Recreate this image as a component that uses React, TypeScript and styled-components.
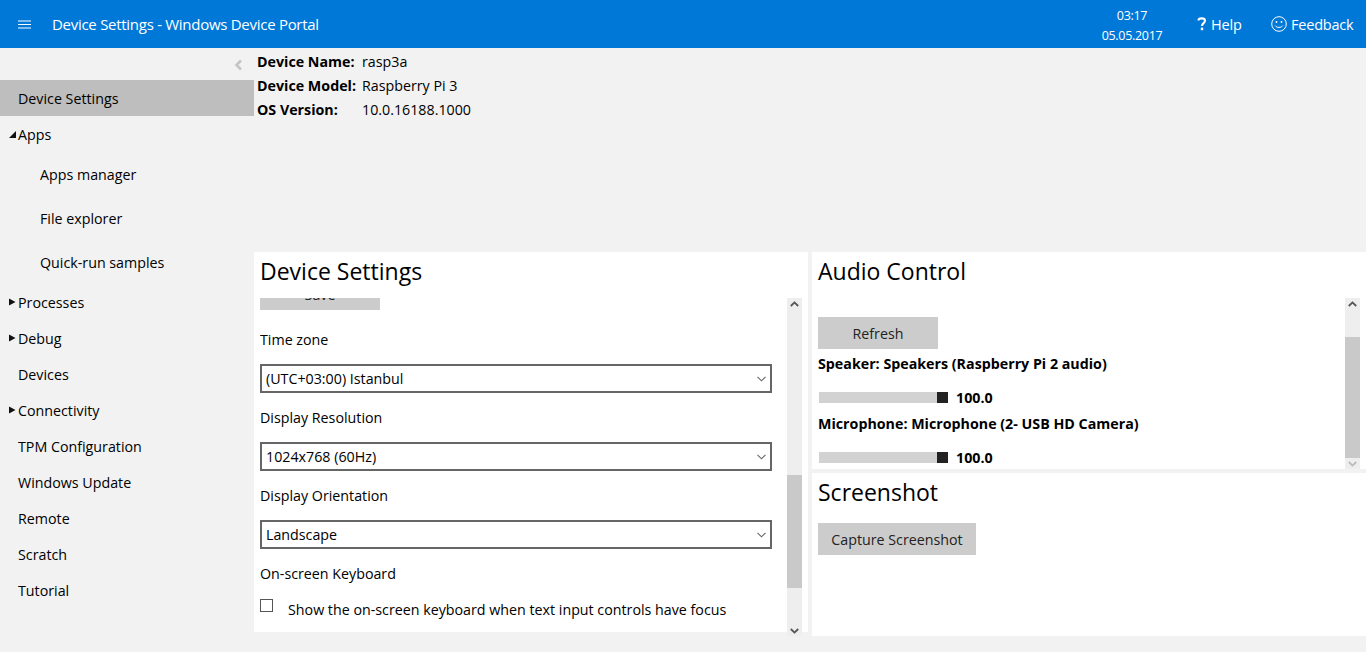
import React from "react";
import styled, { createGlobalStyle } from "styled-components";

const GlobalStyle = createGlobalStyle`
  html, body {
    margin: 0;
    padding: 0;
    height: 100%;
    overflow: hidden;
    background: #f2f2f2;
    color: #000;
    font-family: "Open Sans", "Noto Sans", "Liberation Sans", sans-serif;
    font-size: 14.25px;
  }
  * { box-sizing: border-box; }
`;

const Page = styled.div`
  width: 1366px;
  height: 652px;
  display: flex;
  flex-direction: column;
  overflow: hidden;
`;

const Header = styled.header`
  height: 48px;
  flex: none;
  background: #0078d7;
  color: #fff;
  display: flex;
  align-items: center;
`;

const Burger = styled.div`
  width: 52px;
  padding-left: 18px;
  display: flex;
  align-items: center;
`;

const Title = styled.div`
  flex: 1;
  font-size: 15px;
  letter-spacing: -0.28px;
`;

const Clock = styled.div`
  width: 70px;
  margin-right: 30px;
  padding-top: 3px;
  text-align: center;
  font-size: 12.5px;
  letter-spacing: -0.3px;
  line-height: 20px;
`;

const HeaderLink = styled.div<{ $width: number }>`
  width: ${(p) => p.$width}px;
  display: flex;
  align-items: center;
  gap: 4px;
  font-size: 14.5px;
  letter-spacing: -0.2px;
`;

const Body = styled.div`
  flex: 1;
  display: flex;
  min-height: 0;
`;

const Sidebar = styled.nav`
  width: 254px;
  flex: none;
`;

const Collapse = styled.div`
  height: 32px;
  display: flex;
  justify-content: flex-end;
  align-items: center;
  padding: 2px 10px 0 0;
`;

const NavRow = styled.div<{ $selected?: boolean; $sub?: boolean }>`
  height: ${(p) => (p.$sub ? 44 : 36)}px;
  display: flex;
  align-items: center;
  padding-left: ${(p) => (p.$sub ? 40 : 18)}px;
  background: ${(p) => (p.$selected ? "#bebebe" : "transparent")};
  position: relative;
`;

const Caret = styled.svg<{ $top: number }>`
  position: absolute;
  left: 9px;
  top: ${(p) => p.$top}px;
`;

const Main = styled.div`
  flex: 1;
  min-width: 0;
  display: flex;
  flex-direction: column;
`;

const InfoArea = styled.div`
  height: 204px;
  flex: none;
  padding: 1px 0 0 3px;
  display: grid;
  grid-template-columns: 105px 1fr;
  grid-auto-rows: 24px;
  align-items: center;
`;

const InfoLabel = styled.div`
  font-weight: 700;
`;

const Panels = styled.div`
  display: flex;
  gap: 4px;
  align-items: flex-start;
`;

const LeftPanel = styled.section`
  width: 554px;
  height: 380px;
  background: #fff;
  display: flex;
  flex-direction: column;
  padding-left: 6px;
`;

const RightColumn = styled.div`
  width: 554px;
  display: flex;
  flex-direction: column;
  gap: 4px;
`;

const AudioPanel = styled.section`
  height: 217px;
  background: #fff;
  display: flex;
  flex-direction: column;
  padding-left: 6px;
`;

const ShotPanel = styled.section`
  height: 163px;
  background: #fff;
  padding-left: 6px;
`;

const Heading = styled.h2`
  margin: 0;
  height: 46px;
  flex: none;
  font-size: 23px;
  font-weight: 400;
  line-height: 38px;
`;

const PanelBody = styled.div`
  flex: 1;
  min-height: 0;
  display: flex;
`;

const Scroller = styled.div`
  flex: 1;
  min-width: 0;
  overflow: hidden;
`;

const ScrollContent = styled.div<{ $offset: number }>`
  margin-top: ${(p) => p.$offset}px;
`;

const Button = styled.div<{ $width: number }>`
  width: ${(p) => p.$width}px;
  height: 32px;
  background: #ccc;
  color: #222;
  display: flex;
  align-items: center;
  justify-content: center;
`;

const SaveButton = styled(Button)`
  margin-bottom: 20px;
`;

const FieldLabel = styled.div`
  height: 20px;
  line-height: 20px;
`;

const Select = styled.div`
  width: 512px;
  height: 29px;
  margin: 14px 0 15px;
  border: 2px solid #666;
  display: flex;
  align-items: center;
  justify-content: space-between;
  padding: 0 4px;
`;

const CheckRow = styled.div`
  display: flex;
  align-items: center;
  margin-top: 16px;
`;

const CheckBox = styled.div`
  width: 13px;
  height: 13px;
  border: 1px solid #555;
  margin: -9px 15px 0 0;
`;

const Track = styled.div<{ $height: number }>`
  width: 15px;
  height: ${(p) => p.$height}px;
  margin-right: 6px;
  flex: none;
  background: #eee;
  position: relative;
  display: flex;
  flex-direction: column;
  justify-content: space-between;
  align-items: center;
  padding: 3px 0 2px;
`;

const Thumb = styled.div<{ $top: number; $height: number }>`
  position: absolute;
  left: 0;
  width: 15px;
  top: ${(p) => p.$top}px;
  height: ${(p) => p.$height}px;
  background: #c9c9c9;
`;

const DeviceName = styled.div`
  font-weight: 700;
  height: 20px;
  line-height: 20px;
  margin-top: 5px;
`;

const SliderRow = styled.div`
  display: flex;
  align-items: center;
  margin: 13px 0 7px;
  height: 20px;
`;

const Slider = styled.div`
  width: 129px;
  height: 11px;
  margin-left: 1px;
  background: #d2d2d2;
  display: flex;
  justify-content: flex-end;
`;

const SliderThumb = styled.div`
  width: 11px;
  height: 11px;
  background: #222;
`;

const SliderValue = styled.div`
  margin-left: 8px;
  font-weight: 700;
`;

const ShotActions = styled.div`
  padding-top: 4px;
`;

function Chevron({ up, color = "#555" }: { up?: boolean; color?: string }) {
  return (
    <svg width="9" height="6" viewBox="0 0 9 6">
      <path
        d={up ? "M0.8 5 L4.5 1.4 L8.2 5" : "M0.8 1 L4.5 4.6 L8.2 1"}
        fill="none"
        stroke={color}
        strokeWidth="1.8"
      />
    </svg>
  );
}

function SelectBox({ value }: { value: string }) {
  return (
    <Select>
      {value}
      <svg width="9" height="6" viewBox="0 0 9 6">
        <path d="M0.5 0.8 L4.5 4.8 L8.5 0.8" fill="none" stroke="#666" strokeWidth="1.1" />
      </svg>
    </Select>
  );
}

function NavItem({ label, caret }: { label: string; caret?: "open" | "closed" }) {
  return (
    <NavRow>
      {caret === "open" && (
        <Caret $top={15} width="7" height="7" viewBox="0 0 7 7">
          <path d="M0 7 L7 7 L7 0 Z" fill="#111" />
        </Caret>
      )}
      {caret === "closed" && (
        <Caret $top={14} width="7" height="8" viewBox="0 0 7 8">
          <path d="M0 0.5 L6.5 4 L0 7.5 Z" fill="#111" />
        </Caret>
      )}
      {label}
    </NavRow>
  );
}

export default function App() {
  return (
    <Page>
      <GlobalStyle />
      <Header>
        <Burger>
          <svg width="13" height="9" viewBox="0 0 13 9">
            <path d="M0 1 H13 M0 4.5 H13 M0 8 H13" stroke="#fff" strokeWidth="1" />
          </svg>
        </Burger>
        <Title>Device Settings - Windows Device Portal</Title>
        <Clock>
          03:17
          <br />
          05.05.2017
        </Clock>
        <HeaderLink $width={74}>
          <svg width="10" height="14" viewBox="0 0 10 14">
            <path
              d="M1.5 3.5 C1.5 0.8 8 0.5 8 3.8 C8 6.2 5 6 5 9"
              fill="none"
              stroke="#fff"
              strokeWidth="2.1"
            />
            <rect x="3.8" y="10.6" width="2.4" height="2.6" fill="#fff" />
          </svg>
          Help
        </HeaderLink>
        <HeaderLink $width={95}>
          <svg width="16" height="16" viewBox="0 0 16 16">
            <circle cx="8" cy="8" r="7.3" fill="none" stroke="#fff" strokeWidth="1" />
            <circle cx="5.5" cy="6" r="0.9" fill="#fff" />
            <circle cx="10.5" cy="6" r="0.9" fill="#fff" />
            <path d="M4.2 9.6 C5.5 12 10.5 12 11.8 9.6" fill="none" stroke="#fff" strokeWidth="1" />
          </svg>
          Feedback
        </HeaderLink>
      </Header>
      <Body>
        <Sidebar>
          <Collapse>
            <svg width="12" height="12" viewBox="0 0 12 12">
              <path d="M9 1.5 L4.5 6 L9 10.5" fill="none" stroke="#c4c4c4" strokeWidth="2.6" />
            </svg>
          </Collapse>
          <NavRow $selected>Device Settings</NavRow>
          <NavItem label="Apps" caret="open" />
          <NavRow $sub>Apps manager</NavRow>
          <NavRow $sub>File explorer</NavRow>
          <NavRow $sub>Quick-run samples</NavRow>
          <NavItem label="Processes" caret="closed" />
          <NavItem label="Debug" caret="closed" />
          <NavItem label="Devices" />
          <NavItem label="Connectivity" caret="closed" />
          <NavItem label="TPM Configuration" />
          <NavItem label="Windows Update" />
          <NavItem label="Remote" />
          <NavItem label="Scratch" />
          <NavItem label="Tutorial" />
        </Sidebar>
        <Main>
          <InfoArea>
            <InfoLabel>Device Name:</InfoLabel>
            <div>rasp3a</div>
            <InfoLabel>Device Model:</InfoLabel>
            <div>Raspberry Pi 3</div>
            <InfoLabel>OS Version:</InfoLabel>
            <div>10.0.16188.1000</div>
          </InfoArea>
          <Panels>
            <LeftPanel>
              <Heading>Device Settings</Heading>
              <PanelBody>
                <Scroller>
                  <ScrollContent $offset={-20}>
                    <SaveButton $width={120}>Save</SaveButton>
                    <FieldLabel>Time zone</FieldLabel>
                    <SelectBox value="(UTC+03:00) Istanbul" />
                    <FieldLabel>Display Resolution</FieldLabel>
                    <SelectBox value="1024x768 (60Hz)" />
                    <FieldLabel>Display Orientation</FieldLabel>
                    <SelectBox value="Landscape" />
                    <FieldLabel>On-screen Keyboard</FieldLabel>
                    <CheckRow>
                      <CheckBox />
                      Show the on-screen keyboard when text input controls have focus
                    </CheckRow>
                  </ScrollContent>
                </Scroller>
                <Track $height={338}>
                  <Chevron up />
                  <Thumb $top={177} $height={113} />
                  <Chevron />
                </Track>
              </PanelBody>
            </LeftPanel>
            <RightColumn>
              <AudioPanel>
                <Heading>Audio Control</Heading>
                <PanelBody>
                  <Scroller>
                    <ScrollContent $offset={19}>
                      <Button $width={120}>Refresh</Button>
                      <DeviceName>Speaker: Speakers (Raspberry Pi 2 audio)</DeviceName>
                      <SliderRow>
                        <Slider>
                          <SliderThumb />
                        </Slider>
                        <SliderValue>100.0</SliderValue>
                      </SliderRow>
                      <DeviceName>Microphone: Microphone (2- USB HD Camera)</DeviceName>
                      <SliderRow>
                        <Slider>
                          <SliderThumb />
                        </Slider>
                        <SliderValue>100.0</SliderValue>
                      </SliderRow>
                    </ScrollContent>
                  </Scroller>
                  <Track $height={171}>
                    <Chevron up />
                    <Thumb $top={39} $height={121} />
                    <Chevron color="#bbb" />
                  </Track>
                </PanelBody>
              </AudioPanel>
              <ShotPanel>
                <Heading>Screenshot</Heading>
                <ShotActions>
                  <Button $width={158}>Capture Screenshot</Button>
                </ShotActions>
              </ShotPanel>
            </RightColumn>
          </Panels>
        </Main>
      </Body>
    </Page>
  );
}
